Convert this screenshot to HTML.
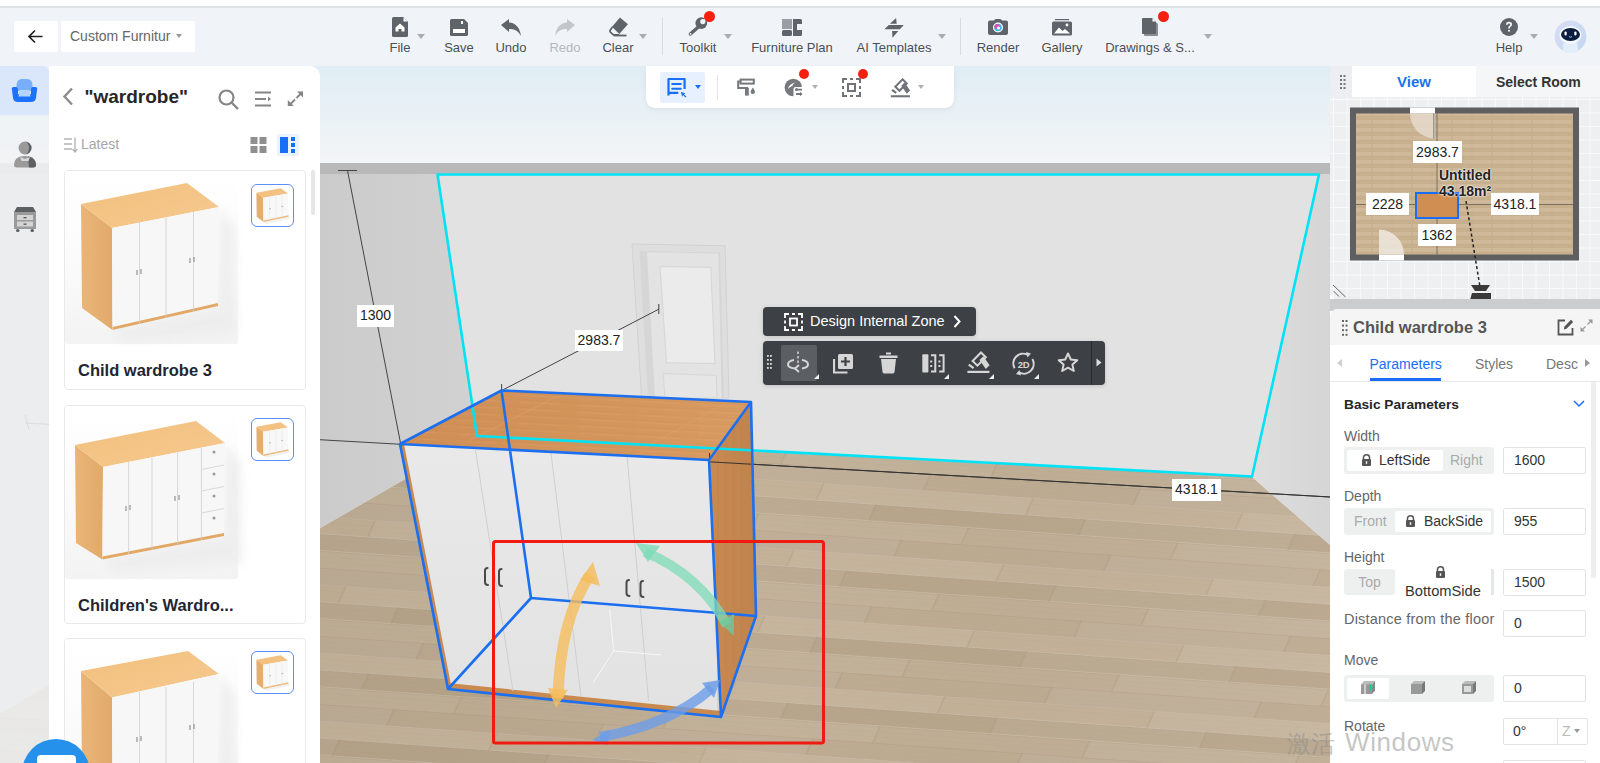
<!DOCTYPE html>
<html><head><meta charset="utf-8">
<style>
*{box-sizing:border-box;margin:0;padding:0}
html,body{width:1600px;height:763px;overflow:hidden;background:#fff;font-family:"Liberation Sans",sans-serif;color:#333}
.abs{position:absolute}
#hdr{position:absolute;left:0;top:0;width:1600px;height:66px;background:#f0f4f8;border-top:6px solid #fff}
#hdr:before{content:"";position:absolute;left:0;top:0;width:1600px;height:2px;background:#dfe2e5}
.tb{position:absolute;top:0;height:60px;text-align:center;font-size:13px;color:#4b4f55;white-space:nowrap}
.tb .lb{position:absolute;left:0;right:0;top:35px;line-height:14px}
.tb svg{position:absolute;top:10px}
.caret{position:absolute;width:0;height:0;border-left:4px solid transparent;border-right:4px solid transparent;border-top:5px solid #a9adb2}
.sep{position:absolute;width:1px;background:#d9dde1}
.reddot{position:absolute;width:10px;height:10px;border-radius:50%;background:#f5200f}
#lcol{position:absolute;left:0;top:66px;width:49px;height:697px;background:#eef0f2}
#lpanel{position:absolute;left:49px;top:66px;width:271px;height:697px;background:#fff;border-top-right-radius:10px}
#vp{position:absolute;left:320px;top:66px;width:1010px;height:697px;overflow:hidden}
#rp{position:absolute;left:1330px;top:66px;width:270px;height:697px;background:#f3f4f5}
.lbl{background:#fff;font-size:14px;color:#222;text-align:center;line-height:21px;white-space:nowrap}
</style></head><body>
<div id="hdr"></div>
<!-- back + custom furniture -->
<div class="abs" style="left:14px;top:21px;width:44px;height:31px;background:#fff;border-radius:2px"></div>
<svg class="abs" style="left:27px;top:29px" width="17" height="15" viewBox="0 0 17 15"><path d="M15.5 7.5H2 M8 1.5L2 7.5L8 13.5" fill="none" stroke="#222" stroke-width="1.7"/></svg>
<div class="abs" style="left:61px;top:21px;width:134px;height:31px;background:#fff;border-radius:2px;font-size:14px;color:#666;line-height:31px;padding-left:9px">Custom Furnitur</div>
<div class="caret" style="left:176px;top:34px;border-top-color:#999;border-left-width:3px;border-right-width:3px;border-top-width:4px"></div>

<svg class="abs" style="left:392.0px;top:17px" width="16" height="20" viewBox="0 0 16 20"><path d="M1.5 0H11L16 5V18.5Q16 20 14.5 20H1.5Q0 20 0 18.5V1.5Q0 0 1.5 0Z" fill="#5f636a"/><path d="M11 0V5H16" fill="#fff" stroke="#5f636a" stroke-width="1"/><path d="M3.5 10.5L8 6.5L12.5 10.5V14.5H9.5V12H6.5V14.5H3.5Z" fill="#fff"/></svg>
<div class="abs" style="left:340px;top:40px;width:120px;text-align:center;font-size:13px;line-height:15px;color:#4b4f55;white-space:nowrap">File</div>
<svg class="abs" style="left:450.0px;top:19px" width="18" height="17" viewBox="0 0 18 17"><path d="M1.5 0H14L18 4V15.5Q18 17 16.5 17H1.5Q0 17 0 15.5V1.5Q0 0 1.5 0Z" fill="#5f636a"/><rect x="3" y="10" width="12" height="4" fill="#fff"/><rect x="11" y="2" width="2" height="3" fill="#fff"/></svg>
<div class="abs" style="left:399px;top:40px;width:120px;text-align:center;font-size:13px;line-height:15px;color:#4b4f55;white-space:nowrap">Save</div>
<svg class="abs" style="left:501.0px;top:19px" width="20" height="17" viewBox="0 0 20 17"><path d="M0 6L8 0V3.5Q18 4 20 17Q16 9 8 10V13Z" fill="#5f636a"/></svg>
<div class="abs" style="left:451px;top:40px;width:120px;text-align:center;font-size:13px;line-height:15px;color:#4b4f55;white-space:nowrap">Undo</div>
<svg class="abs" style="left:555.0px;top:19px" width="20" height="17" viewBox="0 0 20 17"><path d="M20 6L12 0V3.5Q2 4 0 17Q4 9 12 10V13Z" fill="#c3c6ca"/></svg>
<div class="abs" style="left:505px;top:40px;width:120px;text-align:center;font-size:13px;line-height:15px;color:#b4b8bc;white-space:nowrap">Redo</div>
<svg class="abs" style="left:609px;top:16px" width="20" height="21" viewBox="0 0 20 21"><path d="M3 10.7L11 1.5L18.9 8.3L10.3 18Z" fill="#5f636a"/><path d="M3.5 11L1.2 14.2Q0.6 15.3 1.6 16.3L4.4 18.8H10" fill="none" stroke="#5f636a" stroke-width="1.8" stroke-linejoin="round"/><path d="M4.5 19.5H17.5" stroke="#5f636a" stroke-width="1.8"/></svg>
<div class="abs" style="left:558px;top:40px;width:120px;text-align:center;font-size:13px;line-height:15px;color:#4b4f55;white-space:nowrap">Clear</div>
<svg class="abs" style="left:688px;top:15px" width="22" height="22" viewBox="0 0 22 22"><defs><mask id="wm"><rect width="22" height="22" fill="#fff"/><circle cx="14.8" cy="6.6" r="2.6" fill="#000"/><path d="M14.8 6.6L19 0L22 4Z" fill="#000"/></mask></defs><g mask="url(#wm)"><circle cx="13.3" cy="8.1" r="5.9" fill="#5f636a"/></g><path d="M2.4 19L10 12.2" stroke="#5f636a" stroke-width="3.4" stroke-linecap="round"/><circle cx="2.5" cy="18.9" r="0.9" fill="#fff"/></svg>
<div class="abs" style="left:638px;top:40px;width:120px;text-align:center;font-size:13px;line-height:15px;color:#4b4f55;white-space:nowrap">Toolkit</div>
<svg class="abs" style="left:782.0px;top:19px" width="20" height="17" viewBox="0 0 20 17"><rect x="0" y="0" width="10" height="10" fill="#9a9ea4"/><rect x="0" y="11" width="10" height="6" rx="1.5" fill="#5f636a"/><path d="M11 0H18.5Q20 0 20 1.5V5H15V11H20V15.5Q20 17 18.5 17H11Z" fill="#5f636a"/></svg>
<div class="abs" style="left:732px;top:40px;width:120px;text-align:center;font-size:13px;line-height:15px;color:#4b4f55;white-space:nowrap">Furniture Plan</div>
<svg class="abs" style="left:884px;top:17px" width="20" height="21" viewBox="0 0 20 21"><path d="M5.9 6.7L12.1 0.9L12.7 6.7Z M0.4 12.2L4.8 8H19.8L15.8 12.2Z M8.1 14.1H14.3L8.5 20.7Z" fill="#5f636a"/></svg>
<div class="abs" style="left:834px;top:40px;width:120px;text-align:center;font-size:13px;line-height:15px;color:#4b4f55;white-space:nowrap">AI Templates</div>
<svg class="abs" style="left:988.0px;top:19px" width="20" height="16" viewBox="0 0 20 16"><path d="M6 1.5Q6.5 0 8 0H12Q13.5 0 14 1.5H18Q20 1.5 20 3.5V14Q20 16 18 16H2Q0 16 0 14V3.5Q0 1.5 2 1.5Z" fill="#5f636a"/><circle cx="10" cy="8.5" r="5" fill="#fff"/><circle cx="10" cy="8.5" r="3.8" fill="#3fb6f0"/><circle cx="9" cy="7.5" r="2.6" fill="#e04fb0"/><circle cx="10.5" cy="9" r="1.6" fill="#fff"/></svg>
<div class="abs" style="left:938px;top:40px;width:120px;text-align:center;font-size:13px;line-height:15px;color:#4b4f55;white-space:nowrap">Render</div>
<svg class="abs" style="left:1052.0px;top:19px" width="20" height="17" viewBox="0 0 20 17"><rect x="3" y="0" width="14" height="1.2" fill="#5f636a"/><rect x="0" y="2.5" width="20" height="14" rx="1.5" fill="#5f636a"/><path d="M2 14.5L7 8.5L10.5 12L13 10L18 14.5Z" fill="#fff"/><circle cx="15" cy="6" r="1.4" fill="#fff"/></svg>
<div class="abs" style="left:1002px;top:40px;width:120px;text-align:center;font-size:13px;line-height:15px;color:#4b4f55;white-space:nowrap">Gallery</div>
<svg class="abs" style="left:1142.0px;top:17px" width="16" height="19" viewBox="0 0 16 19"><path d="M2 3H12L16 7V18Q16 19 15 19H3Q2 19 2 18Z" fill="#8a8e94"/><path d="M1 1H10.5L14 4.5V16Q14 17 13 17H1Q0 17 0 16V2Q0 1 1 1Z" fill="#5f636a"/><path d="M10.5 1V4.5H14" fill="#fff"/></svg>
<div class="abs" style="left:1090px;top:40px;width:120px;text-align:center;font-size:13px;line-height:15px;color:#4b4f55;white-space:nowrap">Drawings &amp; S...</div>
<svg class="abs" style="left:1500.0px;top:18px" width="18" height="18" viewBox="0 0 18 18"><circle cx="9" cy="9" r="9" fill="#5f636a"/><path d="M6 6.8Q6 3.8 9 3.8Q12 3.8 12 6.6Q12 8 10.5 8.8Q9.8 9.2 9.8 10.5H8.2Q8.2 8.5 9.5 7.8Q10.3 7.3 10.3 6.6Q10.3 5.4 9 5.4Q7.7 5.4 7.6 6.8Z" fill="#fff"/><circle cx="9" cy="12.8" r="1" fill="#fff"/></svg>
<div class="abs" style="left:1449px;top:40px;width:120px;text-align:center;font-size:13px;line-height:15px;color:#4b4f55;white-space:nowrap">Help</div>
<div class="caret" style="left:417px;top:34px"></div>
<div class="caret" style="left:639px;top:34px"></div>
<div class="caret" style="left:724px;top:34px"></div>
<div class="caret" style="left:938px;top:34px"></div>
<div class="caret" style="left:1204px;top:34px"></div>
<div class="caret" style="left:1530px;top:34px"></div>
<div class="sep" style="left:662px;top:18px;height:37px"></div>
<div class="sep" style="left:960px;top:18px;height:37px"></div>
<div class="reddot" style="left:704.0px;top:10.5px;width:11px;height:11px"></div>
<div class="reddot" style="left:1157.5px;top:11.0px;width:11px;height:11px"></div>
<svg class="abs" style="left:1554px;top:20px" width="33" height="33" viewBox="0 0 33 33"><defs><linearGradient id="avg" x1="0" y1="0" x2="1" y2="1"><stop offset="0" stop-color="#d9def5"/><stop offset="1" stop-color="#c3d6f2"/></linearGradient></defs><circle cx="16.5" cy="16.5" r="16" fill="url(#avg)"/><rect x="9" y="22" width="15" height="11" rx="4" fill="#e3eefb"/><ellipse cx="16.5" cy="15" rx="11" ry="9" fill="#f4f8fd"/><ellipse cx="16.5" cy="14.5" rx="9.5" ry="6.5" fill="#0b1d3e"/><rect x="10.5" y="11.5" width="2.2" height="4" rx="1.1" fill="#fff"/><rect x="20.3" y="11.5" width="2.2" height="4" rx="1.1" fill="#fff"/><path d="M15 16.5Q16.5 18 18 16.5" stroke="#9fc3ef" stroke-width="1" fill="none"/></svg>
<svg class="abs" style="left:0;top:66px" width="1330" height="697" viewBox="0 66 1330 697">
<defs>
<linearGradient id="sky" x1="0" y1="66" x2="0" y2="163" gradientUnits="userSpaceOnUse"><stop offset="0" stop-color="#e0edf4"/><stop offset="1" stop-color="#f3f5f7"/></linearGradient>
<linearGradient id="lwall" x1="320" y1="0" x2="478" y2="0" gradientUnits="userSpaceOnUse"><stop offset="0" stop-color="#cbcbcb"/><stop offset="1" stop-color="#d2d2d2"/></linearGradient>
<linearGradient id="rwall" x1="1252" y1="0" x2="1330" y2="0" gradientUnits="userSpaceOnUse"><stop offset="0" stop-color="#dedede"/><stop offset="1" stop-color="#d5d5d5"/></linearGradient>
<pattern id="planks" patternUnits="userSpaceOnUse" width="420" height="68" patternTransform="rotate(4) skewX(-20)">
<rect y="0" width="420" height="17" fill="#bdab92"/>
<rect x="60" y="0" width="210" height="17" fill="#fff" opacity="0.05"/>
<path d="M0 0.5H420" stroke="#ad9a80" stroke-width="0.6" opacity="0.6"/>
<path d="M60 0V17M270 0V17" stroke="#a8947a" stroke-width="0.8" opacity="0.7"/>
<path d="M0 6H420M0 11H420" stroke="#b09d83" stroke-width="0.5" opacity="0.25"/>
<rect y="17" width="420" height="17" fill="#c3b198"/>
<rect x="170" y="17" width="210" height="17" fill="#fff" opacity="0.05"/>
<path d="M0 17.5H420" stroke="#ad9a80" stroke-width="0.6" opacity="0.6"/>
<path d="M170 17V34M380 17V34" stroke="#a8947a" stroke-width="0.8" opacity="0.7"/>
<path d="M0 23H420M0 28H420" stroke="#b09d83" stroke-width="0.5" opacity="0.25"/>
<rect y="34" width="420" height="17" fill="#b8a68c"/>
<rect x="20" y="34" width="210" height="17" fill="#fff" opacity="0.05"/>
<path d="M0 34.5H420" stroke="#ad9a80" stroke-width="0.6" opacity="0.6"/>
<path d="M20 34V51M230 34V51" stroke="#a8947a" stroke-width="0.8" opacity="0.7"/>
<path d="M0 40H420M0 45H420" stroke="#b09d83" stroke-width="0.5" opacity="0.25"/>
<rect y="51" width="420" height="17" fill="#c0ae95"/>
<rect x="120" y="51" width="210" height="17" fill="#fff" opacity="0.05"/>
<path d="M0 51.5H420" stroke="#ad9a80" stroke-width="0.6" opacity="0.6"/>
<path d="M120 51V68M330 51V68" stroke="#a8947a" stroke-width="0.8" opacity="0.7"/>
<path d="M0 57H420M0 62H420" stroke="#b09d83" stroke-width="0.5" opacity="0.25"/>
</pattern>
<linearGradient id="floorshade" x1="200" y1="0" x2="1330" y2="0" gradientUnits="userSpaceOnUse"><stop offset="0" stop-color="#3a2a10" stop-opacity="0.06"/><stop offset="0.5" stop-color="#000" stop-opacity="0"/><stop offset="1" stop-color="#fff" stop-opacity="0.04"/></linearGradient>
<linearGradient id="wtop" x1="400" y1="391" x2="751" y2="460" gradientUnits="userSpaceOnUse"><stop offset="0" stop-color="#cf8e55"/><stop offset="1" stop-color="#d99c62"/></linearGradient>
<linearGradient id="wside" x1="709" y1="0" x2="756" y2="0" gradientUnits="userSpaceOnUse"><stop offset="0" stop-color="#c98a52"/><stop offset="1" stop-color="#c0834d"/></linearGradient>
<linearGradient id="wfront" x1="0" y1="444" x2="0" y2="717" gradientUnits="userSpaceOnUse"><stop offset="0" stop-color="#e9e9e9"/><stop offset="1" stop-color="#e2e2e2"/></linearGradient>
<pattern id="grain" patternUnits="userSpaceOnUse" width="60" height="7" patternTransform="rotate(3)"><path d="M0 1H60" stroke="#b8783f" stroke-width="0.6" opacity="0.6"/><path d="M0 3.5H40" stroke="#e3a670" stroke-width="0.7" opacity="0.7"/><path d="M10 5.5H60" stroke="#c0824a" stroke-width="0.5" opacity="0.5"/></pattern>
</defs>
<rect x="0" y="66" width="1330" height="97" fill="url(#sky)"/>
<rect x="0" y="163" width="1330" height="11" fill="#b9b9b9"/>
<polygon points="0,174 437,174 478,437 0,713" fill="url(#lwall)"/>
<polygon points="437,174 1319,174 1252,477 478,437" fill="#e2e2e2"/>
<polygon points="1319,174 1330,174 1330,545 1252,477" fill="url(#rwall)"/>
<polygon points="0,713 478,437 1252,477 1330,545 1330,763 0,763" fill="url(#planks)"/>
<polygon points="0,713 478,437 1252,477 1330,545 1330,763 0,763" fill="url(#floorshade)"/>
<!-- door -->
<polygon points="632,244 725,245.8 729,398 641.6,398" fill="#dedede" stroke="#d2d2d2" stroke-width="1"/>
<polygon points="639.5,251 720,252.5 724,398 648,398" fill="#d6d6d6"/>
<polygon points="647,252.3 718.4,253.4 721.6,398 655,398" fill="#e3e3e3"/>
<polygon points="660,266.4 710.8,267.4 715,363.6 666.5,362.6" fill="#ebebeb" stroke="#d8d8d8" stroke-width="1.2"/>
<polygon points="663.2,373.4 716.2,375.5 717,398 665,398" fill="#e6e6e6" stroke="#d8d8d8" stroke-width="1.2"/>
<!-- dimension lines -->
<path d="M25 423L1330 497M25 415L29 430" stroke="#444" stroke-width="1" fill="none"/>
<path d="M347.5 170.5L400.5 443M338 170.5H357" stroke="#444" stroke-width="1" fill="none"/>
<path d="M501.6 390.6L658.8 309.2M658.8 304V314M501.6 384V391" stroke="#444" stroke-width="1" fill="none"/>
<!-- wardrobe -->
<polygon points="400,444 709,460 721,717 448,689" fill="url(#wfront)"/>
<polygon points="400,444 404,444 452,690 448,689" fill="#c98a50"/>
<polygon points="448,683 721,711 721,717 448,689" fill="#c98a50"/>
<polygon points="709,460 751,402 756,616 721,717" fill="url(#wside)"/>
<path d="M718 450V712M726 438V690M734 427V668M742 416V645" stroke="#b97a44" stroke-width="1" opacity="0.35"/>
<polygon points="400,444 501.5,390.5 751,402 709,460" fill="url(#wtop)"/>
<polygon points="400,444 501.5,390.5 751,402 709,460" fill="url(#grain)" opacity="0.5"/>
<path d="M470 440L560 395M640 450L730 401" stroke="#e0a86e" stroke-width="0.8" opacity="0.5"/>
<path d="M475.5 450L513 691M551 453L581 696M627 455L648.6 701" stroke="#cfcfcf" stroke-width="1" fill="none"/>
<path d="M487.5 568Q485 568 485 571V582Q485 585 488 585M501.5 569Q499 569 499 572V583Q499 586 502 586M629 580Q626.5 580 626.5 583V593Q626.5 596 629.5 596M643 581Q640.5 581 640.5 584V594Q640.5 597 643.5 597" stroke="#4a4a4a" stroke-width="2" fill="none" stroke-linecap="round"/>
<path d="M613.6 651L661 655M613.6 651L593 683M613.6 651L609.7 609" stroke="#f8f8f8" stroke-width="1" fill="none" opacity="0.9"/>
<path d="M709 461.8L1330 497M709.5 453V470" stroke="#333" stroke-width="1" fill="none"/>
<!-- cyan outline -->
<polygon points="437.5,174.5 1319,174.5 1252,476.5 477,436" fill="none" stroke="#00e3f7" stroke-width="2.6" stroke-linejoin="round"/>
<!-- blue bbox -->
<path d="M400,444L709,460L751,402L501.5,390.5Z M400,444L448,689L721,717L709,460 M751,402L756,616L721,717 M501.5,390.5L531,598L756,616 M448,689L531,598" fill="none" stroke="#1b6ff0" stroke-width="2.6" stroke-linejoin="round"/>
<!-- gizmo arrows -->
<path d="M558 698Q560 620 590 575" stroke="#f5bd5e" stroke-width="11" fill="none" opacity="0.8"/>
<polygon points="580,580 593,562 600,586" fill="#f5bd5e" opacity="0.85"/>
<polygon points="548,688 556,708 568,690" fill="#f5bd5e" opacity="0.85"/>
<path d="M645 552Q700 575 727 625" stroke="#7edbb6" stroke-width="10" fill="none" opacity="0.75"/>
<polygon points="636,543 660,546 648,562" fill="#7edbb6" opacity="0.8"/>
<polygon points="719,622 734,636 734,614" fill="#6cc99a" opacity="0.8"/>
<path d="M600 737Q670 725 712 688" stroke="#6d9de8" stroke-width="10" fill="none" opacity="0.8"/>
<polygon points="592,740 610,730 608,745" fill="#6d9de8" opacity="0.85"/>
<polygon points="702,683 720,680 714,698" fill="#6d9de8" opacity="0.85"/>
<!-- red rect -->
<rect x="493.5" y="541.5" width="330" height="201.5" rx="2" fill="none" stroke="#f01a12" stroke-width="3"/>
</svg>
<div class="abs lbl" style="left:357px;top:305px;width:37px;height:22px">1300</div>
<div class="abs lbl" style="left:575px;top:330px;width:48px;height:21px">2983.7</div>
<div class="abs lbl" style="left:1172px;top:479px;width:49px;height:22px">4318.1</div>

<div class="abs" style="left:646px;top:66px;width:308px;height:42px;background:#fff;border-radius:0 0 9px 9px;box-shadow:0 2px 6px rgba(0,0,0,0.06)"></div>
<div class="abs" style="left:660px;top:72px;width:45px;height:31px;background:#e6f0fe;border-radius:2px"></div>
<svg class="abs" style="left:660px;top:72px" width="30" height="28" viewBox="660 72 30 28"><path d="M678.3 92.8H668.5M684.6 89V79H668.5V95.6" fill="none" stroke="#1a6ef5" stroke-width="2.2" stroke-linejoin="round"/><path d="M672.2 84H680.8M672.2 88.7H680.8" stroke="#1a6ef5" stroke-width="2" stroke-linecap="round"/><path d="M680.8 92L685.5 93.3L683.8 94.2L686.4 96.6L685.5 97.4L683 95L682.2 96.8Z" fill="#1a6ef5"/></svg>
<div class="caret" style="left:694.5px;top:85px;border-top-color:#1a6ef5;border-left-width:3.5px;border-right-width:3.5px;border-top-width:4px"></div>
<div class="abs" style="left:717px;top:75px;width:1px;height:25px;background:#e6e6e6"></div>
<svg class="abs" style="left:730px;top:72px" width="30" height="28" viewBox="730 72 30 28"><rect x="740.6" y="79.6" width="13.2" height="4" fill="none" stroke="#75787d" stroke-width="2"/><path d="M740 81.5H738.2V88H747.2V89" fill="none" stroke="#75787d" stroke-width="2"/><rect x="745" y="88" width="3.8" height="7.6" fill="#75787d"/><path d="M752.8 87.5Q755 90.5 755 92Q755 94 752.8 94Q750.6 94 750.6 92Q750.6 90.5 752.8 87.5Z" fill="#75787d"/></svg>
<svg class="abs" style="left:780px;top:74px" width="26" height="26" viewBox="780 74 26 26"><defs><mask id="gm"><rect x="780" y="74" width="26" height="26" fill="#fff"/><rect x="793.5" y="87" width="12" height="12" rx="2" fill="#000"/></mask></defs><circle cx="793.3" cy="87.5" r="8.7" fill="#75787d" mask="url(#gm)"/><path d="M788 89Q788.5 84 795.5 82.5Q792 84.5 792.5 86Q790 86.5 788 89Z" fill="#fff"/><path d="M796 89.6H802M796 94H802" stroke="#75787d" stroke-width="1.8"/><circle cx="796.5" cy="89.6" r="1.5" fill="#75787d"/><path d="M800 91.8L802.5 94L800 96.2Z" fill="#75787d"/><path d="M793.5 87.5V96.2" stroke="#75787d" stroke-width="0"/></svg>
<div class="reddot" style="left:799px;top:69px;width:10px;height:10px"></div>
<div class="caret" style="left:811.5px;top:85px;border-top-color:#b0b0b0;border-left-width:3.5px;border-right-width:3.5px;border-top-width:4px"></div>
<svg class="abs" style="left:842px;top:78px" width="19" height="19" viewBox="0 0 19 19"><path d="M1 5V1H5M14 1H18V5M18 14V18H14M5 18H1V14M8 1H11M8 18H11M1 8V11M18 8V11" stroke="#707378" stroke-width="2" fill="none"/><rect x="6" y="6" width="7" height="7" fill="none" stroke="#707378" stroke-width="2"/></svg>
<div class="reddot" style="left:858px;top:69px;width:10px;height:10px"></div>
<svg class="abs" style="left:889px;top:78px" width="22" height="20" viewBox="966 351 24 23"><polygon points="972.6,361 981,352.5 985.8,357.3 977.4,365.7" fill="none" stroke="#707378" stroke-width="2.3"/><polygon points="979.5,360 983.3,356.2 989.6,365.3 985.8,369.1" fill="#707378"/><path d="M968.8 364.6L973.6 368.2" stroke="#707378" stroke-width="2.4"/><rect x="967.4" y="370.8" width="22" height="2.4" fill="#707378"/></svg>
<div class="caret" style="left:917.5px;top:85px;border-top-color:#b0b0b0;border-left-width:3.5px;border-right-width:3.5px;border-top-width:4px"></div>
<div class="abs" style="left:763px;top:307px;width:213px;height:29px;background:#3d4045;border-radius:4px;box-shadow:0 1px 4px rgba(0,0,0,0.15)"></div>
<svg class="abs" style="left:784px;top:313px" width="19" height="18" viewBox="0 0 19 18"><path d="M1 5V1H5M14 1H18V5M18 13V17H14M5 17H1V13M8 1H11M8 17H11M1 7.5V10.5M18 7.5V10.5" stroke="#fff" stroke-width="1.8" fill="none"/><rect x="6" y="5.5" width="7" height="7" fill="none" stroke="#fff" stroke-width="1.8"/></svg>
<div class="abs" style="left:810px;top:312px;font-size:14.5px;color:#fff;line-height:18px;white-space:nowrap">Design Internal Zone</div>
<svg class="abs" style="left:953px;top:315px" width="8" height="13" viewBox="0 0 8 13"><path d="M1.5 1L6.5 6.5L1.5 12" fill="none" stroke="#fff" stroke-width="2"/></svg>
<div class="abs" style="left:763px;top:341px;width:342px;height:44px;background:#3d4045;border-radius:4px;box-shadow:0 1px 4px rgba(0,0,0,0.15)"></div>
<svg class="abs" style="left:767px;top:355px" width="5" height="14" viewBox="0 0 5 14"><g fill="#ddd"><rect x="0" y="0" width="1.8" height="1.8"/><rect x="3" y="0" width="1.8" height="1.8"/><rect x="0" y="4" width="1.8" height="1.8"/><rect x="3" y="4" width="1.8" height="1.8"/><rect x="0" y="8" width="1.8" height="1.8"/><rect x="3" y="8" width="1.8" height="1.8"/><rect x="0" y="12" width="1.8" height="1.8"/><rect x="3" y="12" width="1.8" height="1.8"/></g></svg>
<div class="abs" style="left:780.5px;top:345px;width:36.5px;height:36px;background:#5b5e63;border-radius:2px"></div>
<svg class="abs" style="left:787px;top:351px" width="22" height="22" viewBox="0 0 22 22"><path d="M11 0.5V3M11 5V7.5M11 9.5V12" stroke="#d6d6d6" stroke-width="1.5"/><path d="M7 9Q1 10 1 13.5Q1 17 9 17.5" fill="none" stroke="#d6d6d6" stroke-width="2"/><path d="M15 9Q21 10 21 13.5Q21 16.5 15 17.5" fill="none" stroke="#d6d6d6" stroke-width="2"/><path d="M12 14L8 17.5L12 21" fill="none" stroke="#d6d6d6" stroke-width="2"/></svg>
<svg class="abs" style="left:813.5px;top:374px" width="5" height="5" viewBox="0 0 5 5"><path d="M5 0V5H0Z" fill="#eee"/></svg>
<svg class="abs" style="left:833px;top:353px" width="21" height="21" viewBox="0 0 21 21"><path d="M1 6V19.5H14.5" fill="none" stroke="#d6d6d6" stroke-width="2.2"/><rect x="5" y="1" width="15" height="15" rx="1.5" fill="#d6d6d6"/><path d="M12.5 4V13M8 8.5H17" stroke="#3d4045" stroke-width="2.2"/></svg>
<svg class="abs" style="left:879px;top:352px" width="19" height="22" viewBox="0 0 19 22"><rect x="7" y="0.5" width="5" height="2" fill="#d6d6d6"/><path d="M0.5 3.5H18.5V6H0.5Z" fill="#d6d6d6"/><path d="M2 7H17L15.5 20Q15.3 21.5 13.5 21.5H5.5Q3.7 21.5 3.5 20Z" fill="#d6d6d6"/></svg>
<svg class="abs" style="left:915px;top:345px" width="40" height="40" viewBox="915 345 40 40"><rect x="922.3" y="354.3" width="6.1" height="18.3" rx="1" fill="#d6d6d6"/><path d="M931 355.3H935.3V371.6H931M939.2 355.3H943.6V371.6H939.2" fill="none" stroke="#d6d6d6" stroke-width="2"/><rect x="930.2" y="360.5" width="2" height="2" fill="#d6d6d6"/><rect x="930.2" y="365" width="2" height="2" fill="#d6d6d6"/><rect x="938.4" y="360.5" width="2" height="2" fill="#d6d6d6"/><rect x="938.4" y="365" width="2" height="2" fill="#d6d6d6"/></svg>
<svg class="abs" style="left:943.5px;top:374px" width="5" height="5" viewBox="0 0 5 5"><path d="M5 0V5H0Z" fill="#eee"/></svg>
<svg class="abs" style="left:960px;top:345px" width="40" height="40" viewBox="960 345 40 40"><polygon points="972.6,361 981,352.5 985.8,357.3 977.4,365.7" fill="none" stroke="#d6d6d6" stroke-width="2"/><polygon points="979.5,360 983.3,356.2 989.6,365.3 985.8,369.1" fill="#d6d6d6"/><path d="M968.8 364.6L973.6 368.2" stroke="#d6d6d6" stroke-width="2.2"/><rect x="967.4" y="370.8" width="22" height="2.2" fill="#d6d6d6"/></svg>
<svg class="abs" style="left:988.5px;top:374px" width="5" height="5" viewBox="0 0 5 5"><path d="M5 0V5H0Z" fill="#eee"/></svg>
<svg class="abs" style="left:1005px;top:345px" width="40" height="40" viewBox="1005 345 40 40"><path d="M1014.6 368.3A9.8 9.8 0 0 1 1027.5 354.7" fill="none" stroke="#d6d6d6" stroke-width="2"/><path d="M1032.4 359.1A9.8 9.8 0 0 1 1019.5 372.7" fill="none" stroke="#d6d6d6" stroke-width="2"/><path d="M1026 352L1031 353.5L1027.5 357.5Z M1021 375.4L1016 373.9L1019.5 369.9Z" fill="#d6d6d6"/><text x="1023.5" y="367.6" font-family="Liberation Sans" font-size="9.5" font-weight="bold" fill="#d6d6d6" text-anchor="middle" letter-spacing="-0.3">2D</text></svg>
<svg class="abs" style="left:1033.5px;top:374px" width="5" height="5" viewBox="0 0 5 5"><path d="M5 0V5H0Z" fill="#eee"/></svg>
<svg class="abs" style="left:1057px;top:352px" width="22" height="21" viewBox="0 0 22 21"><path d="M11 1.5L13.8 7.5L20.3 8.2L15.4 12.6L16.8 19L11 15.7L5.2 19L6.6 12.6L1.7 8.2L8.2 7.5Z" fill="none" stroke="#d6d6d6" stroke-width="2" stroke-linejoin="round"/></svg>
<div class="abs" style="left:1091px;top:341px;width:1px;height:44px;background:#2a2c30"></div>
<svg class="abs" style="left:1096px;top:358px" width="6" height="9" viewBox="0 0 6 9"><path d="M0.5 0.5L5.5 4.5L0.5 8.5Z" fill="#ddd"/></svg>
<div class="abs" style="left:0;top:66px;width:49px;height:697px;background:rgba(240,242,245,0.87)"></div>
<div class="abs" style="left:0;top:66px;width:49px;height:49px;background:#dae7fa;border-top-right-radius:6px"></div>
<svg class="abs" style="left:11px;top:78px" width="27" height="25" viewBox="0 0 27 25"><path d="M5.5 8Q5.5 1 11 1H16Q21.5 1 21.5 8V13H5.5Z" fill="#78aefc"/><path d="M1 12Q0 9 3 9H5Q7 9 7 12V16H20V12Q20 9 22 9H24Q27 9 26 12L25 20Q24.5 24 20 24H7Q2.5 24 2 20Z" fill="#1a73fa"/><path d="M8.5 12H18.5L19.5 18.5H7.5Z" fill="#b5d3fd"/></svg>
<svg class="abs" style="left:13px;top:141px" width="24" height="27" viewBox="0 0 24 27"><circle cx="12" cy="7" r="6.5" fill="#9a9a9a"/><path d="M12 0.5A6.5 6.5 0 0 1 12 13.5A4 6.5 0 0 0 12 0.5Z" fill="#5d5f62"/><path d="M1 24Q1 15 12 15Q23 15 23 24Q23 26.5 20 26.5H4Q1 26.5 1 24Z" fill="#9a9a9a"/><path d="M15 15.5Q23 17 23 24Q23 26.5 20 26.5H16Z" fill="#5d5f62"/><path d="M7 16L12 18L17 16L15.5 20H8.5Z" fill="#d9d9d9"/></svg>
<svg class="abs" style="left:14px;top:207px" width="22" height="26" viewBox="0 0 22 26"><path d="M3 0H19L22 5H0Z" fill="#5d5f62"/><rect x="0" y="5" width="22" height="17" fill="#9a9a9a"/><rect x="3" y="8" width="16" height="5" fill="#d4d4d4"/><rect x="3" y="14.5" width="16" height="5" fill="#d4d4d4"/><rect x="9.5" y="10" width="3" height="1.3" fill="#555"/><rect x="9.5" y="16.5" width="3" height="1.3" fill="#555"/><rect x="2" y="22" width="3.5" height="3" rx="1.5" fill="#5d5f62"/><rect x="16.5" y="22" width="3.5" height="3" rx="1.5" fill="#5d5f62"/></svg>

<div class="abs" style="left:49px;top:66px;width:271px;height:697px;background:#fff;border-top-right-radius:10px"></div>
<svg class="abs" style="left:62px;top:87px" width="12" height="19" viewBox="0 0 12 19"><path d="M10 1.5L2.5 9.5L10 17.5" fill="none" stroke="#8c8c8c" stroke-width="2.4"/></svg>
<div class="abs" style="left:84.5px;top:85px;font-size:19px;font-weight:bold;color:#262626;line-height:24px;white-space:nowrap">"wardrobe"</div>
<svg class="abs" style="left:218px;top:89px" width="22" height="21" viewBox="0 0 22 21"><circle cx="8.5" cy="8.5" r="7" fill="none" stroke="#858585" stroke-width="2.2"/><path d="M13.5 13.5L20 20" stroke="#858585" stroke-width="2.4"/></svg>
<svg class="abs" style="left:255px;top:91px" width="17" height="16" viewBox="0 0 17 16"><path d="M0 1.5H16M0 8H11M0 14.5H16" stroke="#858585" stroke-width="2"/><path d="M13 5.5L16 8L13 10.5Z" fill="#858585"/></svg>
<svg class="abs" style="left:287px;top:91px" width="17" height="16" viewBox="0 0 17 16"><path d="M9.5 7L15.5 1M3 13.5L8 8.5" stroke="#858585" stroke-width="1.8"/><path d="M10 0.5H16V6.5Z M0.8 9V15H6.8Z" fill="#858585"/></svg>
<svg class="abs" style="left:64px;top:137px" width="14" height="16" viewBox="0 0 14 16"><path d="M0 2H8M0 7H8M0 12H8" stroke="#b5b5b5" stroke-width="1.5"/><path d="M11 0.5V14.5M8.5 12L11 15L13.5 12" stroke="#b5b5b5" stroke-width="1.4" fill="none"/></svg>
<div class="abs" style="left:81px;top:136px;font-size:14px;color:#a6a6a6;line-height:16px">Latest</div>
<svg class="abs" style="left:250px;top:137px" width="17" height="16" viewBox="0 0 17 16"><rect x="0.5" y="0" width="7" height="7" fill="#8f8f8f"/><rect x="9.5" y="0" width="7" height="7" fill="#8f8f8f"/><rect x="0.5" y="9" width="7" height="7" fill="#8f8f8f"/><rect x="9.5" y="9" width="7" height="7" fill="#8f8f8f"/></svg>
<div class="abs" style="left:277px;top:134px;width:22px;height:22px;background:#ebf3fe;border-radius:2px"></div>
<svg class="abs" style="left:280px;top:137px" width="16" height="16" viewBox="0 0 16 16"><rect x="0" y="0" width="8" height="16" fill="#1a6ef5"/><rect x="11" y="0" width="4" height="4" fill="#1a6ef5"/><rect x="11" y="6" width="4" height="4" fill="#1a6ef5"/><rect x="11" y="12" width="4" height="4" fill="#1a6ef5"/></svg>
<div class="abs" style="left:311px;top:170px;width:4px;height:45px;background:#e6e6e6;border-radius:2px"></div>
<div class="abs" style="left:63.5px;top:169.5px;width:242px;height:220px;border:1px solid #e9e9e9;border-radius:4px;background:#fff"></div>
<div class="abs" style="left:64.5px;top:170.5px;width:173px;height:173px;background:linear-gradient(#fff,#fafafa 60%,#f3f3f3);border-radius:3px"></div>
<div class="abs" style="left:78px;top:360px;font-size:16.5px;font-weight:bold;color:#1f2633;line-height:20px;white-space:nowrap">Child wardrobe 3</div>
<div class="abs" style="left:63.5px;top:404.5px;width:242px;height:219.5px;border:1px solid #e9e9e9;border-radius:4px;background:#fff"></div>
<div class="abs" style="left:64.5px;top:405.5px;width:173px;height:173px;background:linear-gradient(#fff,#fafafa 60%,#f3f3f3);border-radius:3px"></div>
<div class="abs" style="left:78px;top:595px;font-size:16.5px;font-weight:bold;color:#1f2633;line-height:20px;white-space:nowrap">Children's Wardro...</div>
<div class="abs" style="left:63.5px;top:637.5px;width:242px;height:200px;border:1px solid #e9e9e9;border-radius:4px;background:#fff"></div>
<div class="abs" style="left:64.5px;top:638.5px;width:173px;height:173px;background:linear-gradient(#fff,#fafafa 60%,#f3f3f3);border-radius:3px"></div>
<svg class="abs" style="left:0;top:0" width="320" height="763" viewBox="0 0 320 763"><defs><filter id="blur" x="-20%" y="-20%" width="140%" height="140%"><feGaussianBlur stdDeviation="5"/></filter><linearGradient id="ctop" x1="0" y1="0" x2="1" y2="1"><stop offset="0" stop-color="#f2c07f"/><stop offset="1" stop-color="#f6c98e"/></linearGradient><linearGradient id="cside" x1="0" y1="0" x2="1" y2="0"><stop offset="0" stop-color="#eab577"/><stop offset="1" stop-color="#e1aa6b"/></linearGradient></defs>
<polygon points="219,207 235,227 236,334 122.5,342 112.5,330 218,306" fill="#ececec" filter="url(#blur)" opacity="0.8"/>
<polygon points="81,204 112,228 112.5,330 82,308" fill="url(#cside)"/>
<polygon points="81,204 187,183 219,207 112,228" fill="url(#ctop)"/>
<polygon points="112,228 219,207 218,306 112.5,330" fill="#f7f7f7"/>
<polygon points="112.5,327 218,303 218,306 112.5,330" fill="#e2a868"/>
<path d="M139.5 222L139.5 324" stroke="#cfcfcf" stroke-width="0.8"/>
<path d="M166 217L166 318" stroke="#cfcfcf" stroke-width="0.8"/>
<path d="M193.5 212L193.5 312" stroke="#cfcfcf" stroke-width="0.8"/>
<path d="M137 270v5M141 269v5" stroke="#8a8a8a" stroke-width="1.1"/>
<path d="M190 258v5M194 257v5" stroke="#8a8a8a" stroke-width="1.1"/>
<polygon points="225,443 241,463 242,564 112.4,571.5 102.4,559.5 224,536" fill="#ececec" filter="url(#blur)" opacity="0.8"/>
<polygon points="75,445 103,467 102.4,559.5 76,543" fill="url(#cside)"/>
<polygon points="75,445 196,421 225,443 103,467" fill="url(#ctop)"/>
<polygon points="103,467 225,443 224,536 102.4,559.5" fill="#f7f7f7"/>
<polygon points="102.4,556.5 224,533 224,536 102.4,559.5" fill="#e2a868"/>
<path d="M128.6 462L128.6 554" stroke="#cfcfcf" stroke-width="0.8"/>
<path d="M152 457.5L152 549.5" stroke="#cfcfcf" stroke-width="0.8"/>
<path d="M177.6 452.5L177.6 544.5" stroke="#cfcfcf" stroke-width="0.8"/>
<path d="M201.4 447.5L201.4 540" stroke="#cfcfcf" stroke-width="0.8"/>
<path d="M126 506v5M130 505v5" stroke="#8a8a8a" stroke-width="1.1"/>
<path d="M175 496v5M179 495v5" stroke="#8a8a8a" stroke-width="1.1"/>
<path d="M201.4 469.5L224 465M201.4 491L224 486.5M201.4 513L224 508.5" stroke="#d0d0d0" stroke-width="0.8"/><circle cx="214" cy="452" r="1.5" fill="#999"/><circle cx="214" cy="474" r="1.5" fill="#999"/><circle cx="214" cy="496" r="1.5" fill="#999"/><circle cx="214" cy="518" r="1.5" fill="#999"/>
<polygon points="219,674 235,694 236,801 122.5,809 112.5,797 218,773" fill="#ececec" filter="url(#blur)" opacity="0.8"/>
<polygon points="81,671 112,697.6 112.5,797 82,775" fill="url(#cside)"/>
<polygon points="81,671 188,651 219,674 112,697.6" fill="url(#ctop)"/>
<polygon points="112,697.6 219,674 218,773 112.5,797" fill="#f7f7f7"/>
<polygon points="112.5,794 218,770 218,773 112.5,797" fill="#e2a868"/>
<path d="M139.5 692L139.5 790" stroke="#cfcfcf" stroke-width="0.8"/>
<path d="M166 687L166 785" stroke="#cfcfcf" stroke-width="0.8"/>
<path d="M193.5 682L193.5 780" stroke="#cfcfcf" stroke-width="0.8"/>
<path d="M137 737v5M141 736v5" stroke="#8a8a8a" stroke-width="1.1"/>
<path d="M190 725v5M194 724v5" stroke="#8a8a8a" stroke-width="1.1"/>
</svg>
<div class="abs" style="left:250.5px;top:184px;width:43px;height:43px;border:1.5px solid #5b8ff5;border-radius:6px;background:#fff"></div>
<svg class="abs" style="left:250.5px;top:184px" width="43" height="43" viewBox="0 0 43 43"><polygon points="12.5,38 37.5,32.8 40,34.5 15,40" fill="#ededed" opacity="0.7"/><polygon points="5.4,8.8 29.6,4.2 37.1,9.4 12.2,13.7" fill="#f3c283"/><polygon points="5.4,8.8 12.2,13.7 12.5,38 5.7,32.7" fill="#e6ad6c"/><polygon points="12.2,13.7 37.1,9.4 37.5,32.8 12.5,38" fill="#f8f8f8"/><polygon points="12.5,36.5 37.5,31.3 37.5,32.8 12.5,38" fill="#ebb97a"/><path d="M18.5 12.6V36.7M24.9 11.5V35.4M31 10.4V34.1" stroke="#e4e4e4" stroke-width="0.5"/><circle cx="19.1" cy="24.8" r="0.7" fill="#aaa"/><circle cx="31.2" cy="22.5" r="0.7" fill="#aaa"/></svg>
<div class="abs" style="left:250.5px;top:418px;width:43px;height:43px;border:1.5px solid #5b8ff5;border-radius:6px;background:#fff"></div>
<svg class="abs" style="left:250.5px;top:418px" width="43" height="43" viewBox="0 0 43 43"><polygon points="12.5,38 37.5,32.8 40,34.5 15,40" fill="#ededed" opacity="0.7"/><polygon points="5.4,8.8 29.6,4.2 37.1,9.4 12.2,13.7" fill="#f3c283"/><polygon points="5.4,8.8 12.2,13.7 12.5,38 5.7,32.7" fill="#e6ad6c"/><polygon points="12.2,13.7 37.1,9.4 37.5,32.8 12.5,38" fill="#f8f8f8"/><polygon points="12.5,36.5 37.5,31.3 37.5,32.8 12.5,38" fill="#ebb97a"/><path d="M18.5 12.6V36.7M24.9 11.5V35.4M31 10.4V34.1" stroke="#e4e4e4" stroke-width="0.5"/><circle cx="19.1" cy="24.8" r="0.7" fill="#aaa"/><circle cx="31.2" cy="22.5" r="0.7" fill="#aaa"/></svg>
<div class="abs" style="left:250.5px;top:651px;width:43px;height:43px;border:1.5px solid #5b8ff5;border-radius:6px;background:#fff"></div>
<svg class="abs" style="left:250.5px;top:651px" width="43" height="43" viewBox="0 0 43 43"><polygon points="12.5,38 37.5,32.8 40,34.5 15,40" fill="#ededed" opacity="0.7"/><polygon points="5.4,8.8 29.6,4.2 37.1,9.4 12.2,13.7" fill="#f3c283"/><polygon points="5.4,8.8 12.2,13.7 12.5,38 5.7,32.7" fill="#e6ad6c"/><polygon points="12.2,13.7 37.1,9.4 37.5,32.8 12.5,38" fill="#f8f8f8"/><polygon points="12.5,36.5 37.5,31.3 37.5,32.8 12.5,38" fill="#ebb97a"/><path d="M18.5 12.6V36.7M24.9 11.5V35.4M31 10.4V34.1" stroke="#e4e4e4" stroke-width="0.5"/><circle cx="19.1" cy="24.8" r="0.7" fill="#aaa"/><circle cx="31.2" cy="22.5" r="0.7" fill="#aaa"/></svg>
<div class="abs" style="left:21.6px;top:738.8px;width:68px;height:68px;border-radius:50%;background:#2591ea"></div>
<div class="abs" style="left:37px;top:755px;width:39px;height:20px;border-radius:4px;background:#fff"></div>
<div class="abs" style="left:1330px;top:66px;width:270px;height:234px;border-bottom-left-radius:8px;overflow:hidden;background-color:#edeff1;background-image:linear-gradient(#f8f9fa 1px,transparent 1px),linear-gradient(90deg,#f8f9fa 1px,transparent 1px);background-size:13.5px 13.5px;background-position:3px 6px"></div>
<div class="abs" style="left:1330px;top:66px;width:22px;height:31px;background:#eceef1"></div>
<div class="abs" style="left:1352px;top:66px;width:124px;height:31px;background:#fff"></div>
<div class="abs" style="left:1476px;top:66px;width:124px;height:31px;background:#f4f6f8"></div>
<svg class="abs" style="left:1340px;top:75px" width="6" height="14" viewBox="0 0 6 14"><g fill="#777"><rect x="0" y="0" width="2" height="2"/><rect x="3.5" y="0" width="2" height="2"/><rect x="0" y="4" width="2" height="2"/><rect x="3.5" y="4" width="2" height="2"/><rect x="0" y="8" width="2" height="2"/><rect x="3.5" y="8" width="2" height="2"/><rect x="0" y="12" width="2" height="2"/><rect x="3.5" y="12" width="2" height="2"/></g></svg>
<div class="abs" style="left:1352px;top:73px;width:124px;text-align:center;font-size:15px;font-weight:bold;color:#1a73e8;line-height:18px">View</div>
<div class="abs" style="left:1496px;top:73px;font-size:14px;font-weight:bold;color:#333;line-height:18px;white-space:nowrap">Select Room</div>
<svg class="abs" style="left:1330px;top:97px" width="270" height="203" viewBox="1330 97 270 203">
<defs><pattern id="mfl" patternUnits="userSpaceOnUse" width="40" height="8"><rect width="40" height="8" fill="#c8b08f"/><rect y="0" width="40" height="4" fill="#cfb99a"/><path d="M0 4H40M0 8H40" stroke="#c0a886" stroke-width="0.4"/><path d="M12 0V4M32 4V8" stroke="#b9a17e" stroke-width="0.4"/></pattern></defs>
<rect x="1350" y="107.5" width="229" height="153" fill="#5f5f5f"/>
<rect x="1356" y="113.5" width="217" height="141" fill="url(#mfl)"/>
<rect x="1410" y="107.5" width="25" height="6" fill="#fff"/>
<path d="M1410 113.5A25 25 0 0 0 1435 138.5V113.5Z" fill="#e8ddd0" opacity="0.8"/>
<rect x="1433" y="113.5" width="1.5" height="25" fill="#999"/>
<rect x="1379" y="254.5" width="25" height="6" fill="#fff"/>
<path d="M1379 229.5A25 25 0 0 1 1404 254.5H1379Z" fill="#efe8df" opacity="0.85"/>
<path d="M1437 113.5V254.5M1356 204.5H1573" stroke="#444" stroke-width="0.6"/>
<rect x="1416" y="193" width="42" height="25" fill="#d18e52" stroke="#1a6ef5" stroke-width="2"/>
<path d="M1466 201L1480 287" stroke="#222" stroke-width="1.5" stroke-dasharray="3,2.5"/>
<path d="M1471 285H1490L1486 291H1475Z" fill="#3a3a3a"/>
<path d="M1472 293H1491V300H1470Z" fill="#3a3a3a"/>
<path d="M1333 285L1345.5 297M1333.5 291L1339 296.5" stroke="#555" stroke-width="0.9"/>
</svg>
<div class="abs" style="left:1413px;top:141px;width:49px;height:22px;background:#fff;font-size:14px;color:#222;text-align:center;line-height:22px">2983.7</div>
<div class="abs" style="left:1366px;top:193px;width:43px;height:22px;background:#fff;font-size:14px;color:#222;text-align:center;line-height:22px">2228</div>
<div class="abs" style="left:1491px;top:193px;width:48px;height:22px;background:#fff;font-size:14px;color:#222;text-align:center;line-height:22px">4318.1</div>
<div class="abs" style="left:1418px;top:224px;width:38px;height:22px;background:#fff;font-size:14px;color:#222;text-align:center;line-height:22px">1362</div>
<div class="abs" style="left:1420px;top:167px;width:90px;text-align:center;font-size:14px;font-weight:bold;color:#222;line-height:16px;text-shadow:0 0 2px #fff,0 0 2px #fff">Untitled<br>43.18m²</div>
<div class="abs" style="left:1330px;top:299px;width:270px;height:12px;background:#cbcccd"></div>
<div class="abs" style="left:1330px;top:309px;width:270px;height:454px;background:#fff;border-top-left-radius:8px;overflow:hidden"></div>
<div class="abs" style="left:1330px;top:309px;width:270px;height:36px;background:#f5f5f5;border-top-left-radius:8px"></div>
<svg class="abs" style="left:1342px;top:320px" width="6" height="16" viewBox="0 0 6 16"><g fill="#666"><rect x="0" y="0" width="2" height="2"/><rect x="3.5" y="0" width="2" height="2"/><rect x="0" y="4.6" width="2" height="2"/><rect x="3.5" y="4.6" width="2" height="2"/><rect x="0" y="9.2" width="2" height="2"/><rect x="3.5" y="9.2" width="2" height="2"/><rect x="0" y="13.8" width="2" height="2"/><rect x="3.5" y="13.8" width="2" height="2"/></g></svg>
<div class="abs" style="left:1353px;top:317px;font-size:16.5px;font-weight:bold;color:#555;line-height:20px;white-space:nowrap">Child wardrobe 3</div>
<svg class="abs" style="left:1557px;top:319px" width="17" height="17" viewBox="0 0 17 17"><path d="M8 1.5H1.5V15.5H15.5V9" fill="none" stroke="#555" stroke-width="1.8"/><path d="M14 0.8L16.2 3L9.5 9.7L6.8 10.5L7.5 7.5Z" fill="#555"/></svg>
<svg class="abs" style="left:1580px;top:319px" width="13" height="13" viewBox="0 0 13 13"><path d="M7.5 5.5L12 1M1.5 11.5L5.5 7.5" stroke="#9a9a9a" stroke-width="1.3"/><path d="M8 0.5H12.5V5Z M0.5 8V12.5H5Z" fill="#9a9a9a"/></svg>
<div class="abs" style="left:1330px;top:381px;width:270px;height:1px;background:#e8e8e8"></div>
<svg class="abs" style="left:1337px;top:359px" width="6" height="8" viewBox="0 0 6 8"><path d="M5 0L0 4L5 8Z" fill="#d0d0d0"/></svg>
<svg class="abs" style="left:1585px;top:359px" width="6" height="8" viewBox="0 0 6 8"><path d="M0 0L5 4L0 8Z" fill="#999"/></svg>
<div class="abs" style="left:1369.5px;top:355px;font-size:14px;color:#1a6ef5;line-height:18px">Parameters</div>
<div class="abs" style="left:1370px;top:378px;width:71px;height:2.5px;background:#1a6ef5"></div>
<div class="abs" style="left:1475px;top:355px;font-size:14px;color:#777;line-height:18px">Styles</div>
<div class="abs" style="left:1546px;top:355px;font-size:14px;color:#777;line-height:18px">Desc</div>
<div class="abs" style="left:1591px;top:382px;width:4.5px;height:196px;background:#eeeeee;border-radius:2px"></div>
<div class="abs" style="left:1344px;top:396px;font-size:13.7px;font-weight:bold;color:#262626;line-height:17px">Basic Parameters</div>
<svg class="abs" style="left:1573px;top:400px" width="12" height="8" viewBox="0 0 12 8"><path d="M1 1L6 6L11 1" fill="none" stroke="#1a6ef5" stroke-width="1.5"/></svg>
<div class="abs" style="left:1344px;top:428px;font-size:14px;color:#666;line-height:17px;white-space:nowrap">Width</div>
<div class="abs" style="left:1344px;top:447px;width:150px;height:27px;background:#eef0f0;border-radius:3px"></div>
<div class="abs" style="left:1347px;top:450px;width:96px;height:21px;background:#fff;border-radius:2px"></div>
<svg class="abs" style="left:1361px;top:454px" width="11" height="12" viewBox="0 0 11 12"><path d="M2.5 5V3.5Q2.5 0.8 5.5 0.8Q8.5 0.8 8.5 3.5V5" fill="none" stroke="#555" stroke-width="1.5"/><rect x="1" y="5" width="9" height="7" rx="1" fill="#555"/><rect x="4.8" y="7.3" width="1.4" height="2.5" fill="#fff"/></svg>
<div class="abs" style="left:1379px;top:452px;font-size:14px;color:#333;line-height:17px">LeftSide</div>
<div class="abs" style="left:1450px;top:452px;font-size:14px;color:#aaa;line-height:17px">Right</div>
<div class="abs" style="left:1503px;top:447px;width:83px;height:27px;border:1px solid #e3e3e3;border-radius:2px;background:#fff;font-size:14px;color:#333;line-height:25px;padding-left:10px">1600</div>
<div class="abs" style="left:1344px;top:488px;font-size:14px;color:#666;line-height:17px;white-space:nowrap">Depth</div>
<div class="abs" style="left:1344px;top:508px;width:150px;height:27px;background:#eef0f0;border-radius:3px"></div>
<div class="abs" style="left:1395px;top:511px;width:96px;height:21px;background:#fff;border-radius:2px"></div>
<div class="abs" style="left:1354px;top:513px;font-size:14px;color:#aaa;line-height:17px">Front</div>
<svg class="abs" style="left:1405px;top:515px" width="11" height="12" viewBox="0 0 11 12"><path d="M2.5 5V3.5Q2.5 0.8 5.5 0.8Q8.5 0.8 8.5 3.5V5" fill="none" stroke="#555" stroke-width="1.5"/><rect x="1" y="5" width="9" height="7" rx="1" fill="#555"/><rect x="4.8" y="7.3" width="1.4" height="2.5" fill="#fff"/></svg>
<div class="abs" style="left:1424px;top:513px;font-size:14px;color:#333;line-height:17px">BackSide</div>
<div class="abs" style="left:1503px;top:508px;width:83px;height:27px;border:1px solid #e3e3e3;border-radius:2px;background:#fff;font-size:14px;color:#333;line-height:25px;padding-left:10px">955</div>
<div class="abs" style="left:1344px;top:549px;font-size:14px;color:#666;line-height:17px;white-space:nowrap">Height</div>
<div class="abs" style="left:1344px;top:569px;width:51px;height:26px;background:#eef0f0;border-radius:3px;font-size:14px;color:#aaa;line-height:26px;text-align:center">Top</div>
<svg class="abs" style="left:1435px;top:566px" width="11" height="12" viewBox="0 0 11 12"><path d="M2.5 5V3.5Q2.5 0.8 5.5 0.8Q8.5 0.8 8.5 3.5V5" fill="none" stroke="#555" stroke-width="1.5"/><rect x="1" y="5" width="9" height="7" rx="1" fill="#555"/><rect x="4.8" y="7.3" width="1.4" height="2.5" fill="#fff"/></svg>
<div class="abs" style="left:1405px;top:583px;font-size:14.7px;color:#333;line-height:17px">BottomSide</div>
<div class="abs" style="left:1491px;top:569px;width:3px;height:26px;background:#e6e8e8"></div>
<div class="abs" style="left:1503px;top:569px;width:83px;height:27px;border:1px solid #e3e3e3;border-radius:2px;background:#fff;font-size:14px;color:#333;line-height:25px;padding-left:10px">1500</div>
<div class="abs" style="left:1344px;top:611px;font-size:14.5px;letter-spacing:0.2px;color:#666;line-height:17px;white-space:nowrap">Distance from the floor</div>
<div class="abs" style="left:1503px;top:610px;width:83px;height:27px;border:1px solid #e3e3e3;border-radius:2px;background:#fff;font-size:14px;color:#333;line-height:25px;padding-left:10px">0</div>
<div class="abs" style="left:1344px;top:652px;font-size:14px;color:#666;line-height:17px;white-space:nowrap">Move</div>
<div class="abs" style="left:1344px;top:675px;width:150px;height:27px;background:#eef0f0;border-radius:3px"></div>
<div class="abs" style="left:1347px;top:678px;width:42px;height:21px;background:#fff;border-radius:2px"></div>
<svg class="abs" style="left:1360px;top:681px" width="16" height="14" viewBox="0 0 16 14"><path d="M4 0H15L12 3.5V13H1V3.5Z" fill="#bbb"/><path d="M1 3.5H12V13H1Z" fill="#999"/><path d="M12 3.5L15 0V9.5L12 13Z" fill="#888"/><path d="M9 2L13 6L9 12Z" fill="#20c997"/><path d="M5 3.5V13" stroke="#fff" stroke-width="1"/></svg>
<svg class="abs" style="left:1411px;top:681px" width="15" height="13" viewBox="0 0 15 13"><path d="M3 0H14L11 3H0Z" fill="#bbb"/><rect x="0" y="3" width="11" height="10" fill="#999"/><path d="M11 3L14 0V10L11 13Z" fill="#777"/></svg>
<svg class="abs" style="left:1462px;top:681px" width="15" height="13" viewBox="0 0 15 13"><path d="M3 0H14L11 3H0Z" fill="#bbb"/><rect x="0" y="3" width="11" height="10" fill="#999"/><path d="M11 3L14 0V10L11 13Z" fill="#777"/><rect x="2" y="5" width="7" height="6" fill="#ddd"/></svg>
<div class="abs" style="left:1503px;top:675px;width:83px;height:27px;border:1px solid #e3e3e3;border-radius:2px;background:#fff;font-size:14px;color:#333;line-height:25px;padding-left:10px">0</div>
<div class="abs" style="left:1344px;top:718px;font-size:14px;color:#666;line-height:17px;white-space:nowrap">Rotate</div>
<div class="abs" style="left:1503px;top:718px;width:85px;height:27px;border:1px solid #e3e3e3;border-radius:2px;background:#fff"></div>
<div class="abs" style="left:1557px;top:718px;width:1px;height:27px;background:#e3e3e3"></div>
<div class="abs" style="left:1513px;top:723px;font-size:14px;color:#333;line-height:17px">0°</div>
<div class="abs" style="left:1562px;top:723px;font-size:14px;color:#bbb;line-height:17px">Z</div>
<div class="caret" style="left:1574px;top:729px;border-top-color:#999;border-left-width:3.5px;border-right-width:3.5px;border-top-width:4px"></div>
<div class="abs" style="left:1503px;top:760px;width:83px;height:27px;border:1px solid #e3e3e3;border-radius:2px;background:#fff"></div>
<div class="abs" style="left:1287px;top:729px;font-size:24px;color:rgba(140,140,140,0.5);line-height:30px;white-space:nowrap;letter-spacing:0px">激活</div>
<div class="abs" style="left:1345px;top:727px;font-size:26px;color:rgba(140,140,140,0.5);line-height:30px;white-space:nowrap;letter-spacing:0.6px">Windows</div>
</body></html>
